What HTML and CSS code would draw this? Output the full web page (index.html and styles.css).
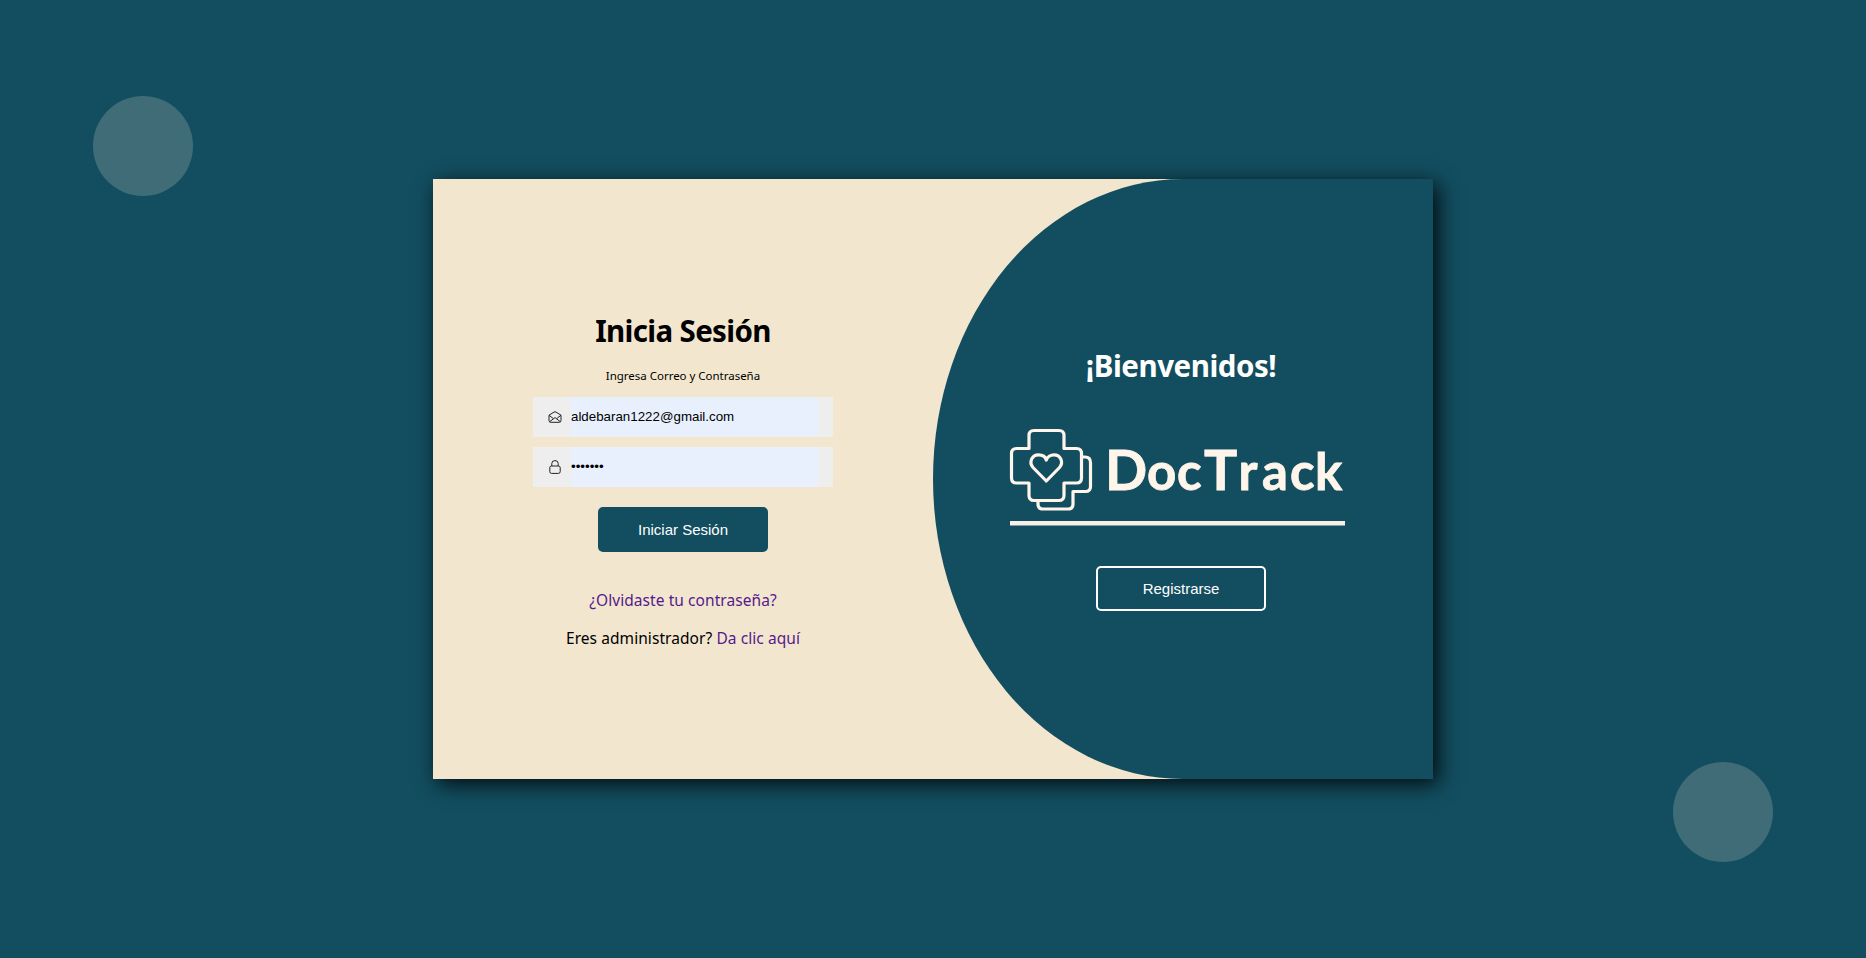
FILE: index.html
```html
<!DOCTYPE html>
<html lang="es">
<head>
<meta charset="utf-8">
<title>DocTrack</title>
<link rel="stylesheet" href="styles.css">
</head>
<body>
<span class="circle circle-top"></span>
<span class="circle circle-bottom"></span>
<main class="card">
  <form class="login">
    <h1 class="title">Inicia Sesión</h1>
    <p class="hint">Ingresa Correo y Contraseña</p>
    <label class="field">
      <svg class="icon" viewBox="0 0 14 14"><path d="M1 5.2 6 2.1Q7 1.5 8 2.1L13 5.2V10.5Q13 12.3 11.2 12.3H2.8Q1 12.3 1 10.5ZM1.2 5.4 5.5 8.7 7 7.6 8.5 8.7 12.8 5.4M5.5 8.7 1.7 11.7M8.5 8.7 12.3 11.7"/></svg>
      <input class="input" type="text" value="aldebaran1222@gmail.com">
    </label>
    <label class="field">
      <svg class="icon" viewBox="0 0 14 14"><path d="M3.8 6V3.5Q3.8.6 7 .6T10.2 3.5V6M3.5 6H10.5Q12.2 6 12.2 7.7V11.6Q12.2 13.4 10.5 13.4H3.5Q1.8 13.4 1.8 11.6V7.7Q1.8 6 3.5 6Z"/></svg>
      <input class="input" type="password" value="1234567">
    </label>
    <button class="button button-solid" type="button">Iniciar Sesión</button>
    <p class="link-row forgot"><a class="link" href="#">¿Olvidaste tu contraseña?</a></p>
    <p class="link-row admin">Eres administrador? <a class="link" href="#">Da clic aquí</a></p>
  </form>
  <section class="welcome">
    <h2 class="title welcome-title">¡Bienvenidos!</h2>
    <svg class="logo" viewBox="0 0 350 110" role="img" aria-label="DocTrack">
      <g class="logo-lines">
        <path d="M34 10.5H59Q64 10.5 64 15.5V28.5H76.5Q81.5 28.5 81.5 33.5V58Q81.5 63 76.5 63H64V75.5Q64 80.5 59 80.5H34Q29 80.5 29 75.5V63H16.5Q11.5 63 11.5 58V33.5Q11.5 28.5 16.5 28.5H29V15.5Q29 10.5 34 10.5Z"/>
        <path d="M82 37H85Q90.5 37 90.5 42.5V66.5Q90.5 71.5 85.5 71.5H73V84Q73 89 68 89H43Q38 89 38 84V81"/>
        <path d="M46.3 61 33 47.5C28.5 42 32 34.8 38.5 34.8C42.5 34.8 45.5 37 46.3 40C47.2 37 50.5 34.8 54 34.8C60.5 34.8 64 42 59.5 47.5Z"/>
      </g>
      <text class="logo-text" x="105 147 177 204 238.5 262 290 315" y="70">D<tspan class="logo-small">oc</tspan>T<tspan class="logo-small">rack</tspan></text>
      <rect class="logo-rule" x="10" y="101" width="335" height="4.5"/>
    </svg>
    <button class="button button-outline" type="button">Registrarse</button>
  </section>
</main>
</body>
</html>
```
FILE: styles.css
```css
* { box-sizing: border-box; margin: 0; padding: 0; }
body {
  min-height: 100vh;
  display: flex;
  align-items: center;
  justify-content: center;
  background: #124e60;
  color: #000;
  font-family: "Noto Sans", sans-serif;
  overflow: hidden;
}
.circle {
  position: absolute;
  width: 100px;
  height: 100px;
  border-radius: 50%;
  background: #406c77;
}
.circle-top { top: 10%; left: 5%; }
.circle-bottom { bottom: 10%; right: 5%; }
.card {
  display: flex;
  width: 1000px;
  height: 600px;
  background: #f2e6cf;
  box-shadow: 5px 5px 20px #000d;
}
.login, .welcome {
  width: 500px;
  display: flex;
  flex-direction: column;
  align-items: center;
}
.login { padding-top: 132px; }
.title {
  font-size: 29.5px;
  line-height: 40px;
  font-weight: 700;
  letter-spacing: -.65px;
  white-space: nowrap;
}
.welcome-title { letter-spacing: -.45px; }
.hint {
  margin-top: 15px;
  font-size: 11.5px;
  line-height: 20px;
  letter-spacing: -.02px;
}
.field {
  display: flex;
  align-items: center;
  width: 300px;
  height: 40px;
  margin-top: 11px;
  padding: 0 15px;
  background: #eee;
}
.field + .field { margin-top: 10px; }
.icon {
  width: 14px;
  height: 14px;
  margin-right: 9px;
  fill: none;
  stroke: #222;
  stroke-width: 1;
}
.input {
  flex: 1;
  min-width: 0;
  height: 40px;
  padding-bottom: 2px;
  border: 0;
  outline: 0;
  background: #e8f0fe;
  font: 13.333px "Liberation Sans", Arial, sans-serif;
}
.button {
  width: 170px;
  height: 45px;
  border: 0;
  border-radius: 5px;
  color: #fff;
  font: 15px "Liberation Sans", Arial, sans-serif;
}
.button-solid { margin-top: 20px; background: #124e60; }
.button-outline { margin-top: 36px; background: transparent; border: 2px solid #fff; }
.link-row { font-size: 15.5px; line-height: 22px; letter-spacing: .07px; }
.forgot { margin-top: 37px; }
.admin { margin-top: 16px; }
.link { color: #551a8b; text-decoration: none; }
.welcome {
  padding: 167px 4px 0 0;
  background: #124e60;
  border-radius: 50% 0 0 50%;
  color: #fff;
}
.logo { width: 350px; height: 110px; margin: 34px 12px 0 0; }
.logo-lines { fill: none; stroke: #fff5ea; stroke-width: 3.2; stroke-linejoin: round; stroke-linecap: round; }
.logo-text { font: 700 55.5px Lato, sans-serif; fill: #fff5ea; stroke: #fff5ea; stroke-width: .8; }
.logo-small { font-size: 51px; }
.logo-rule { fill: #f8f0e8; }
```
